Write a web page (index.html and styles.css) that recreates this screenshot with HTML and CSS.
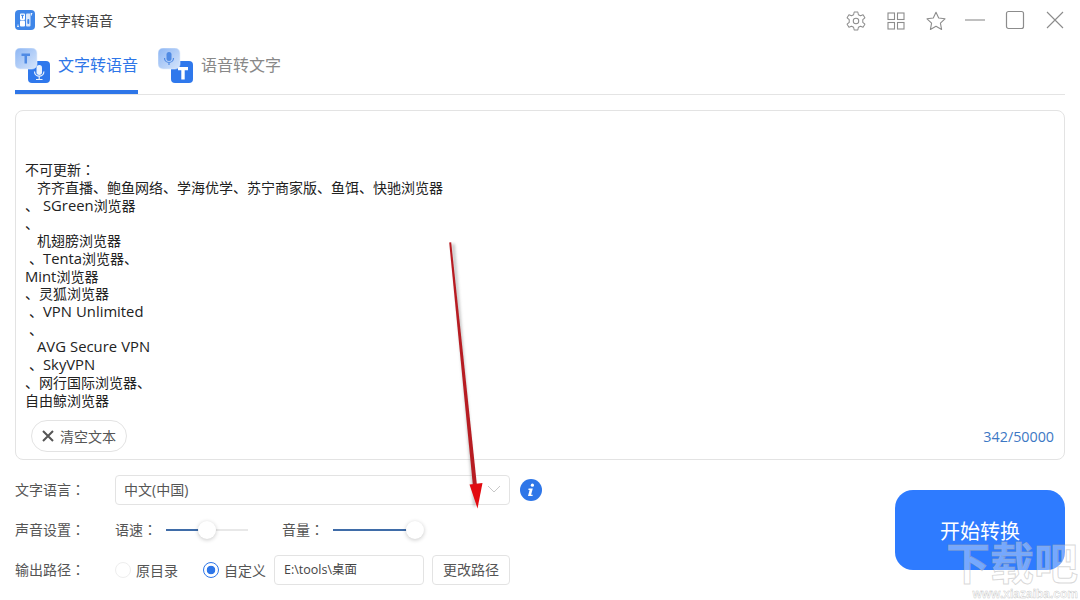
FILE: index.html
```html
<!DOCTYPE html>
<html lang="zh-CN">
<head>
<meta charset="utf-8">
<title>文字转语音</title>
<link rel="stylesheet" href="styles.css">
</head>
<body>
<div class="app">
  <header class="titlebar">
    <div class="brand">
      <svg class="logo" viewBox="0 0 20 20">
        <rect width="20" height="20" rx="4" fill="#3f86e8"/>
        <rect x="5" y="3.500" width="5" height="6.500" rx="1" fill="#fff"/>
        <rect x="5" y="10.500" width="5" height="6" rx="1" fill="#fff"/>
        <rect x="11" y="3.500" width="4.500" height="13" rx="1" fill="#dbe8fb"/>
        <path d="M6 5.200h3M7.500 5.200v3.300" fill="none" stroke="#3f86e8" stroke-width="1.100"/>
        <rect x="12.300" y="9" width="2" height="5" rx="1" fill="#3f86e8"/>
        <path d="M16.500 3v2.500M15.800 3.800l.7-.8.700.8M3 14.500v2.500M2.300 16.200l.7.800.7-.8" fill="none" stroke="#fff" stroke-width=".8"/>
      </svg>
      <span class="app-name">文字转语音</span>
    </div>
    <div class="controls">
      <span class="ctl ctl-nudge"><svg viewBox="0 0 24 24" width="22" height="22" fill="none" stroke="#8c8c8c" stroke-width="1.100" stroke-linejoin="round"><circle cx="12" cy="12" r="3"/><path d="M10 2.200h4l.6 3 2.300 1.100 2.800-1.200 2 3.400-2.300 2v3l2.300 2-2 3.400-2.800-1.200-2.300 1.100-.6 3h-4l-.6-3-2.300-1.100-2.800 1.200-2-3.400 2.300-2v-3l-2.300-2 2-3.400 2.800 1.200 2.300-1.100z"/></svg></span>
      <span class="ctl ctl-nudge"><svg viewBox="0 0 18 18" width="18" height="18" fill="none" stroke="#8c8c8c" stroke-width="1.100"><rect x="1" y="1" width="6.500" height="6.500"/><rect x="10.500" y="1" width="6.500" height="6.500"/><rect x="1" y="10.500" width="6.500" height="6.500"/><rect x="10.500" y="10.500" width="6.500" height="6.500"/></svg></span>
      <span class="ctl ctl-nudge"><svg viewBox="0 0 20 20" width="20" height="20" fill="none" stroke="#8c8c8c" stroke-width="1.100" stroke-linejoin="round"><path d="M10 1.200l2.700 5.800 6.300.8-4.600 4.300 1.200 6.300-5.600-3.100-5.600 3.100 1.200-6.300L1 7.800l6.300-.8z"/></svg></span>
      <span class="ctl"><svg viewBox="0 0 20 20" width="20" height="20" fill="none" stroke="#8c8c8c" stroke-width="1.100"><path d="M0 10h20"/></svg></span>
      <span class="ctl"><svg viewBox="0 0 20 20" width="20" height="20" fill="none" stroke="#8c8c8c" stroke-width="1.200"><rect x="1.500" y="1.500" width="17" height="17" rx="2"/></svg></span>
      <span class="ctl"><svg viewBox="0 0 18 18" width="18" height="18" fill="none" stroke="#8c8c8c" stroke-width="1.100"><path d="M1 1l16 16M17 1L1 17"/></svg></span>
    </div>
  </header>

  <nav class="tabs">
    <div class="tab tab-active">
      <svg class="tab-icon" viewBox="0 0 35 35">
        <defs>
          <linearGradient id="glass" x1="0" y1="0" x2="1" y2="1">
            <stop offset="0" stop-color="#8db6f4"/>
            <stop offset="1" stop-color="#d6e5fb"/>
          </linearGradient>
        </defs>
        <rect x="13" y="13" width="22" height="22" rx="4" fill="#2f78ec"/>
        <rect x="21.500" y="17" width="5.500" height="10" rx="2.700" fill="#eaf2fd"/>
        <path d="M19.500 23.500a4.700 4.700 0 0 0 9.400 0M24.200 28.500v2.500M21 31.500h6.500" fill="none" stroke="#eaf2fd" stroke-width="1.200"/>
        <rect x="0" y="0" width="22" height="21" rx="5" fill="url(#glass)" stroke="#e4eefc" stroke-width=".6"/>
        <path d="M6.500 5.500h8.500v2.400h-3v7.500H9.500V7.900h-3z" fill="#4f8ae4"/>
      </svg>
      <span>文字转语音</span>
    </div>
    <div class="tab">
      <svg class="tab-icon" viewBox="0 0 35 35">
        <rect x="13" y="13" width="22" height="22" rx="4" fill="#2f78ec"/>
        <path d="M20 19h10v3.200h-3.300v9.300h-3.400v-9.300H20z" fill="#fff"/>
        <rect x="0" y="0" width="22" height="21" rx="5" fill="url(#glass)" stroke="#e4eefc" stroke-width=".6"/>
        <rect x="8.500" y="4" width="5" height="9" rx="2.500" fill="#4f8ae4"/>
        <path d="M6.500 10a4.500 4.500 0 0 0 9 0M11 14.500v2.500" fill="none" stroke="#4f8ae4" stroke-width="1.200"/>
      </svg>
      <span>语音转文字</span>
    </div>
  </nav>

  <section class="editor">
    <div class="editor-text">

不可更新<span class="colon" lang="zh-TW">：</span>
   齐齐直播、鲍鱼网络、学海优学、苏宁商家版、鱼饵、快驰浏览器
、 <span class="lat">SGreen</span>浏览器
、
   机翅膀浏览器
 、<span class="lat">Tenta</span>浏览器、
<span class="lat">Mint</span>浏览器
、灵狐浏览器
 、<span class="lat">VPN Unlimited</span>
 、
   <span class="lat">AVG Secure VPN</span>
 、<span class="lat">SkyVPN</span>
、网行国际浏览器、
自由鲸浏览器</div>
    <div class="editor-foot">
      <button class="clear-btn">
        <svg viewBox="0 0 12 12" width="12" height="12" fill="none" stroke="#555" stroke-width="2"><path d="M1 1l10 10M11 1L1 11"/></svg>
        <span>清空文本</span>
      </button>
      <span class="counter">342/50000</span>
    </div>
  </section>

  <section class="bottom">
    <div class="form">
      <div class="row">
        <label class="row-label">文字语言<span class="colon" lang="zh-TW">：</span></label>
        <div class="select">
          <span>中文(中国)</span>
          <svg viewBox="0 0 14 8" width="14" height="8" fill="none" stroke="#c8c8c8" stroke-width="1"><path d="M1 1l6 6 6-6"/></svg>
        </div>
        <svg class="info" viewBox="0 0 22 22" width="22" height="22">
          <circle cx="11" cy="11" r="11" fill="#2e76e8"/>
          <circle cx="12.400" cy="6.200" r="1.600" fill="#fff"/>
          <path d="M8.600 9.600h4.200l-1.700 6.200h1.500v1.300H8l1.600-6.200H8.300z" fill="#fff"/>
        </svg>
      </div>
      <div class="row">
        <label class="row-label">声音设置<span class="colon" lang="zh-TW">：</span></label>
        <span class="slider-label">语速<span class="colon" lang="zh-TW">：</span></span>
        <div class="slider slider-speed"><i class="fill"></i><i class="thumb"></i></div>
        <span class="slider-label slider-label-vol">音量<span class="colon" lang="zh-TW">：</span></span>
        <div class="slider slider-vol"><i class="fill"></i><i class="thumb"></i></div>
      </div>
      <div class="row">
        <label class="row-label">输出路径<span class="colon" lang="zh-TW">：</span></label>
        <span class="radio"></span>
        <span class="radio-text">原目录</span>
        <span class="radio radio-on"></span>
        <span class="radio-text">自定义</span>
        <div class="path">E:\tools\桌面</div>
        <button class="path-btn">更改路径</button>
      </div>
    </div>
    <button class="start">开始转换</button>
  </section>

  <svg class="arrow" viewBox="0 0 1080 600" width="1080" height="600">
    <defs><filter id="sh" x="-50%" y="-5%" width="200%" height="110%"><feGaussianBlur stdDeviation="1.600"/></filter></defs>
    <path d="M453 244l22 262" stroke="#888" stroke-opacity=".55" stroke-width="3" fill="none" filter="url(#sh)"/>
    <path d="M449.200 242.500l2-.2L476.800 484l-4 .4z" fill="#b71c22"/>
    <path d="M469.500 484.500l13-1.500-5 25.500z" fill="#e20a10"/>
  </svg>

  <div class="watermark">
    <div class="wm-big">下载吧</div>
    <div class="wm-url">www.xiazaiba.com</div>
  </div>
</div>
</body>
</html>
```
FILE: styles.css
```css
* { box-sizing: border-box; }
html, body { margin: 0; padding: 0; background: #fff; }
body {
  font-family: "Open Sans", "Noto Sans CJK SC", sans-serif;
  font-size: 14px;
  color: #444;
}
button { font: inherit; color: inherit; background: #fff; cursor: pointer; }
.colon { font-family: "Noto Sans CJK TC", sans-serif; }

.app {
  position: relative;
  width: 1080px;
  height: 600px;
  overflow: hidden;
  padding: 0 15px;
}

.titlebar {
  height: 40px;
  display: flex;
  align-items: center;
  justify-content: space-between;
}
.brand { display: flex; align-items: center; gap: 8px; }
.logo { width: 20px; height: 20px; display: block; }
.app-name { font-size: 14px; color: #444; }
.controls { display: flex; margin-right: -10px; }
.ctl {
  width: 40px;
  height: 40px;
  display: flex;
  align-items: center;
  justify-content: center;
}
.ctl-nudge { padding-left: 2px; padding-top: 1px; }

.tabs {
  height: 55px;
  display: flex;
  gap: 20px;
  border-bottom: 1px solid #e4e4e4;
}
.tab {
  display: flex;
  gap: 8px;
  height: 54px;
  padding-top: 8px;
  font-size: 16px;
  line-height: 34px;
  color: #888;
}
.tab-active {
  color: #2e76e8;
  border-bottom: 4px solid #2e76e8;
}
.tab-icon { width: 35px; height: 35px; display: block; flex: none; }

.editor {
  margin-top: 15px;
  height: 350px;
  border: 1px solid #e3e3e3;
  border-radius: 8px;
  padding: 15px 10px 7px 9px;
  display: flex;
  flex-direction: column;
  justify-content: space-between;
}
.editor-text {
  white-space: pre;
  font-size: 14px;
  line-height: 17.700px;
  word-spacing: .35px;
  color: #222;
}
.lat { font-size: 14.800px; }
.editor-foot {
  display: flex;
  align-items: center;
  justify-content: space-between;
  padding-left: 6px;
}
.clear-btn {
  height: 32px;
  width: 96px;
  border: 1px solid #e3e3e3;
  border-radius: 16px;
  display: flex;
  align-items: center;
  justify-content: center;
  gap: 6px;
  padding: 0;
  font-size: 14px;
  color: #555;
}
.counter { color: #3d78c4; font-size: 14.300px; }

.bottom {
  margin-top: 15px;
  display: flex;
  justify-content: space-between;
}
.form { display: flex; flex-direction: column; gap: 10px; }
.row { height: 30px; display: flex; align-items: center; }
.row-label { width: 100px; flex: none; font-size: 14px; color: #555; padding-bottom: 2px; }

.select {
  width: 395px;
  height: 30px;
  border: 1px solid #e3e3e3;
  border-radius: 4px;
  padding: 0 8px 2px 8px;
  display: flex;
  align-items: center;
  justify-content: space-between;
  color: #555;
}
.info { margin-left: 10px; display: block; }

.slider-label { width: 51px; color: #555; padding-bottom: 2px; }
.slider-label-vol { margin-left: 34px; }
.slider {
  position: relative;
  width: 82px;
  height: 2px;
  background: #e8e8e8;
}
.slider-vol { width: 91px; }
.slider .fill {
  position: absolute;
  left: 0;
  top: 0;
  height: 2px;
  background: #3f6ca8;
}
.slider-speed .fill { width: 41px; }
.slider-vol .fill { width: 82px; }
.slider .thumb {
  position: absolute;
  top: -8px;
  width: 18px;
  height: 18px;
  border-radius: 50%;
  background: #fff;
  box-shadow: 0 1px 4px rgba(0, 0, 0, .22);
}
.slider-speed .thumb { left: 32px; }
.slider-vol .thumb { left: 73px; }

.radio {
  width: 16px;
  height: 16px;
  border-radius: 50%;
  border: 1px solid #eee;
  background: #fff;
  flex: none;
}
.radio-on {
  border-color: #2e76e8;
  background: radial-gradient(circle, #2e76e8 0 4px, #fff 4.600px);
}
.radio-text { margin-left: 5px; width: 67px; color: #555; padding-bottom: 1px; }
.radio-on + .radio-text { width: 42px; }
.path {
  margin-left: 8px;
  width: 150px;
  height: 30px;
  line-height: 28px;
  border: 1px solid #e3e3e3;
  border-radius: 4px;
  padding: 0 9px;
  font-size: 12.500px;
  color: #444;
}
.path-btn {
  margin-left: 8px;
  width: 78px;
  height: 30px;
  border: 1px solid #e3e3e3;
  border-radius: 4px;
  padding: 0 0 2px;
  font-size: 14px;
  color: #555;
}

.start {
  width: 170px;
  height: 80px;
  margin-top: 15px;
  border: 0;
  border-radius: 18px;
  background: #2e7bff;
  color: #fff;
  font-size: 20px;
  padding: 0;
}

.arrow {
  position: absolute;
  left: 0;
  top: 0;
  pointer-events: none;
}
.watermark {
  position: absolute;
  left: 943px;
  top: 534px;
  width: 135px;
  pointer-events: none;
  text-align: right;
}
.wm-big {
  font-family: "Noto Sans CJK SC", sans-serif;
  font-size: 44px;
  font-weight: 700;
  line-height: 54px;
  white-space: nowrap;
  color: rgba(255, 255, 255, .35);
  -webkit-text-stroke: 1px rgba(170, 170, 170, .45);
}
.wm-url {
  font-family: "Liberation Sans", sans-serif;
  font-size: 12px;
  font-weight: 700;
  line-height: 12px;
  color: rgba(255, 255, 255, .7);
  -webkit-text-stroke: .4px rgba(150, 150, 150, .6);
}
```
